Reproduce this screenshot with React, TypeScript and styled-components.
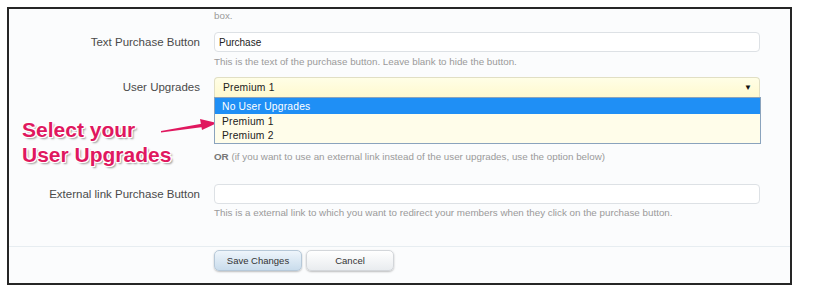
import styled, { createGlobalStyle } from 'styled-components';

const GlobalStyle = createGlobalStyle`
  html, body {
    margin: 0;
    padding: 0;
    background: #ffffff;
  }
  body {
    font-family: 'Liberation Sans', Arial, sans-serif;
  }
`;

const Frame = styled.div`
  position: relative;
  box-sizing: border-box;
  margin: 7px 0 0 7px;
  width: 785px;
  height: 278px;
  border: 2px solid #262626;
  background: #fbfcfd;
  overflow: hidden;
`;

const Form = styled.div`
  padding-top: 1px;
`;

const Row = styled.div<{ $top?: number }>`
  display: grid;
  grid-template-columns: 191px 546px;
  column-gap: 14px;
  align-items: center;
  margin-top: ${p => p.$top ?? 0}px;
`;

const Label = styled.div`
  text-align: right;
  font-size: 11.5px;
  color: #4a4a4a;
`;

const Hint = styled.div`
  grid-column: 2;
  font-size: 9.8px;
  line-height: 12px;
  color: #9a9a9a;

  b {
    color: #777;
    font-weight: bold;
  }
`;

const TextInput = styled.div`
  box-sizing: border-box;
  height: 20px;
  padding: 0 4px;
  display: flex;
  align-items: center;
  font-size: 10px;
  color: #222;
  background: #ffffff;
  border: 1px solid #dde1e5;
  border-radius: 4px;
`;

const SelectWrap = styled.div`
  position: relative;
`;

const SelectBox = styled.div`
  box-sizing: border-box;
  height: 20px;
  padding: 0 8px;
  display: flex;
  align-items: center;
  justify-content: space-between;
  font-size: 10.3px;
  letter-spacing: 0.2px;
  color: #222;
  background: linear-gradient(180deg, #fffee6 0%, #fff9cf 100%);
  border: 1px solid #e1dfc4;
  border-bottom: none;
  border-radius: 4px 4px 0 0;
`;

const Caret = styled.span`
  font-size: 8px;
  color: #111;
  margin-right: -1px;
`;

const DropList = styled.div`
  position: absolute;
  left: 0;
  top: 100%;
  z-index: 2;
  box-sizing: border-box;
  width: 547px;
  height: 47px;
  background: #fffdea;
  border: 1px solid #8aa3bd;
`;

const Option = styled.div<{ $active?: boolean }>`
  height: ${p => (p.$active ? 16 : 14)}px;
  padding: 0 7px;
  display: flex;
  align-items: center;
  font-size: 10.3px;
  letter-spacing: 0.2px;
  color: ${p => (p.$active ? '#ffffff' : '#222')};
  background: ${p => (p.$active ? '#1f8ff5' : 'transparent')};
`;

const Separator = styled.div`
  margin-top: 27px;
  height: 1px;
  background: #e7edf1;
`;

const Buttons = styled.div`
  display: flex;
  gap: 4px;
  margin: 3px 0 0 205px;
`;

const Button = styled.div<{ $primary?: boolean }>`
  box-sizing: border-box;
  width: 88px;
  height: 21px;
  display: flex;
  align-items: center;
  justify-content: center;
  font-size: 9.5px;
  color: #333;
  border-radius: 5px;
  border: 1px solid ${p => (p.$primary ? '#b6c8d8' : '#d3d6da')};
  background: ${p =>
    p.$primary
      ? 'linear-gradient(180deg, #eef5fb 0%, #c9dcec 100%)'
      : 'linear-gradient(180deg, #ffffff 0%, #e9ecef 100%)'};
  box-shadow: 0 1px 2px rgba(0, 0, 0, 0.25);
`;

const Callout = styled.div`
  position: absolute;
  left: 13px;
  top: 108px;
  font-family: 'Liberation Sans', Arial, sans-serif;
  font-weight: bold;
  font-size: 21px;
  line-height: 25px;
  color: #e0185f;
  text-shadow:
    -1px -1px 0 #fff, 1px -1px 0 #fff, -1px 1px 0 #fff, 1px 1px 0 #fff,
    0 -1px 0 #fff, 0 1px 0 #fff, -1px 0 0 #fff, 1px 0 0 #fff,
    2px 2px 2px rgba(0, 0, 0, 0.4);
`;

const Arrow = styled.svg`
  position: absolute;
  left: 150px;
  top: 104px;
  overflow: visible;
`;

export default function App() {
  return (
    <>
      <GlobalStyle />
      <Frame>
        <Form>
          <Row>
            <Hint>box.</Hint>
          </Row>

          <Row $top={10}>
            <Label>Text Purchase Button</Label>
            <TextInput>Purchase</TextInput>
          </Row>
          <Row $top={4}>
            <Hint>This is the text of the purchase button. Leave blank to hide the button.</Hint>
          </Row>

          <Row $top={9}>
            <Label>User Upgrades</Label>
            <SelectWrap>
              <SelectBox>
                <span>Premium 1</span>
                <Caret>▼</Caret>
              </SelectBox>
              <DropList>
                <Option $active>No User Upgrades</Option>
                <Option>Premium 1</Option>
                <Option>Premium 2</Option>
              </DropList>
            </SelectWrap>
          </Row>

          <Row $top={54}>
            <Hint>
              <b>OR</b> (if you want to use an external link instead of the user upgrades, use the option below)
            </Hint>
          </Row>

          <Row $top={21}>
            <Label>External link Purchase Button</Label>
            <TextInput />
          </Row>
          <Row $top={3}>
            <Hint>This is a external link to which you want to redirect your members when they click on the purchase button.</Hint>
          </Row>
        </Form>

        <Separator />
        <Buttons>
          <Button $primary>Save Changes</Button>
          <Button>Cancel</Button>
        </Buttons>

        <Callout>
          Select your
          <br />
          User Upgrades
        </Callout>
        <Arrow width="62" height="22" viewBox="0 0 62 22">
          <polygon points="2,18 44,10.5 44,14 2,19.6" fill="#e0185f" />
          <polygon points="41,6 58,10 43,17" fill="#e0185f" />
        </Arrow>
      </Frame>
    </>
  );
}
